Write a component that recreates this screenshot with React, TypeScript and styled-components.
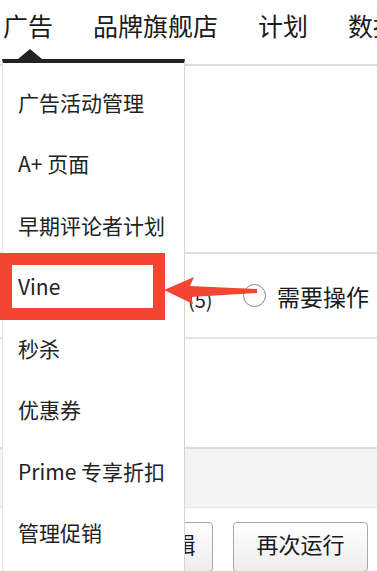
import styled, { createGlobalStyle } from "styled-components";

const GlobalStyle = createGlobalStyle`
  html, body {
    margin: 0;
    padding: 0;
    background: #ffffff;
  }
  body {
    font-family: "Noto Sans CJK SC", "Noto Sans", sans-serif;
    color: #222;
  }
`;

const Page = styled.div`
  position: relative;
  width: 377px;
  height: 571px;
  overflow: hidden;
  background: #fff;
`;

const NavBar = styled.nav`
  display: flex;
  gap: 40px;
  height: 56px;
  padding: 8px 0 0 3px;
  border-bottom: 2px solid #dedede;
  white-space: nowrap;
`;

const NavTab = styled.span`
  font-size: 25px;
  line-height: 34px;
  color: #1a1a1a;
`;

const Content = styled.main`
  display: flex;
  flex-direction: column;
`;

const Blank = styled.div<{ $h: number }>`
  height: ${(p) => p.$h}px;
`;

const FilterRow = styled.div`
  display: flex;
  align-items: center;
  height: 83px;
  padding-left: 188px;
  border-top: 2px solid #e0e0e0;
  border-bottom: 2px solid #e4e4e4;
`;

const Count = styled.span`
  font-size: 20px;
  color: #222;
  margin-top: 8px;
  width: 55px;
`;

const RadioCircle = styled.span`
  width: 23px;
  height: 23px;
  border: 1.5px solid #8a8a8a;
  border-radius: 50%;
  margin-right: 11px;
  box-sizing: border-box;
`;

const RadioLabel = styled.span`
  font-size: 23px;
  color: #1a1a1a;
`;

const TableHead = styled.div`
  height: 58px;
  background: #f3f3f3;
  border-top: 2px solid #dcdcdc;
  border-bottom: 1px solid #e6e6e6;
`;

const ButtonRow = styled.div`
  display: flex;
  gap: 20px;
  padding: 14px 0 0 134px;
`;

const Button = styled.button<{ $w: number }>`
  width: ${(p) => p.$w}px;
  height: 50px;
  border: 1.5px solid #a9a9a9;
  border-radius: 4px;
  background: linear-gradient(#ffffff, #ededed);
  font-family: "Noto Sans CJK SC", sans-serif;
  font-size: 22px;
  color: #1a1a1a;
  padding: 0 0 8px;
`;

const Dropdown = styled.div`
  position: absolute;
  top: 59px;
  left: 2px;
  bottom: 0;
  width: 183px;
  background: #fff;
  border-top: 4px solid #232323;
  border-left: 1px solid #e6e6e6;
  border-right: 1.5px solid #d4d4d4;
  padding-top: 8px;
  box-sizing: border-box;

  &::before {
    content: "";
    position: absolute;
    top: -14px;
    left: 15px;
    border-left: 12px solid transparent;
    border-right: 12px solid transparent;
    border-bottom: 10px solid #232323;
  }
`;

const MenuItem = styled.div`
  display: flex;
  align-items: center;
  height: 61.5px;
  padding-left: 15px;
  font-size: 21px;
  color: #222;
  white-space: nowrap;
`;

const Highlight = styled.div`
  position: absolute;
  left: 0;
  top: 253px;
  width: 165px;
  height: 67px;
  border: 12px solid #f44432;
  box-sizing: border-box;
`;

const ArrowSvg = styled.svg`
  position: absolute;
  left: 160px;
  top: 270px;
`;

const menu = [
  "广告活动管理",
  "A+ 页面",
  "早期评论者计划",
  "Vine",
  "秒杀",
  "优惠券",
  "Prime 专享折扣",
  "管理促销",
];

export default function App() {
  return (
    <Page>
      <GlobalStyle />
      <NavBar>
        <NavTab>广告</NavTab>
        <NavTab>品牌旗舰店</NavTab>
        <NavTab>计划</NavTab>
        <NavTab>数据</NavTab>
      </NavBar>
      <Content>
        <Blank $h={186} />
        <FilterRow>
          <Count>(5)</Count>
          <RadioCircle />
          <RadioLabel>需要操作</RadioLabel>
        </FilterRow>
        <Blank $h={108} />
        <TableHead />
        <ButtonRow>
          <Button $w={79}>编辑</Button>
          <Button $w={135}>再次运行</Button>
        </ButtonRow>
      </Content>
      <Dropdown>
        {menu.map((m) => (
          <MenuItem key={m}>{m}</MenuItem>
        ))}
      </Dropdown>
      <Highlight />
      <ArrowSvg width="105" height="40" viewBox="0 0 105 40">
        <polygon
          points="4,20 34,7 30,16 97,19 97,23 31,27 33,34"
          fill="#f44432"
        />
      </ArrowSvg>
    </Page>
  );
}
